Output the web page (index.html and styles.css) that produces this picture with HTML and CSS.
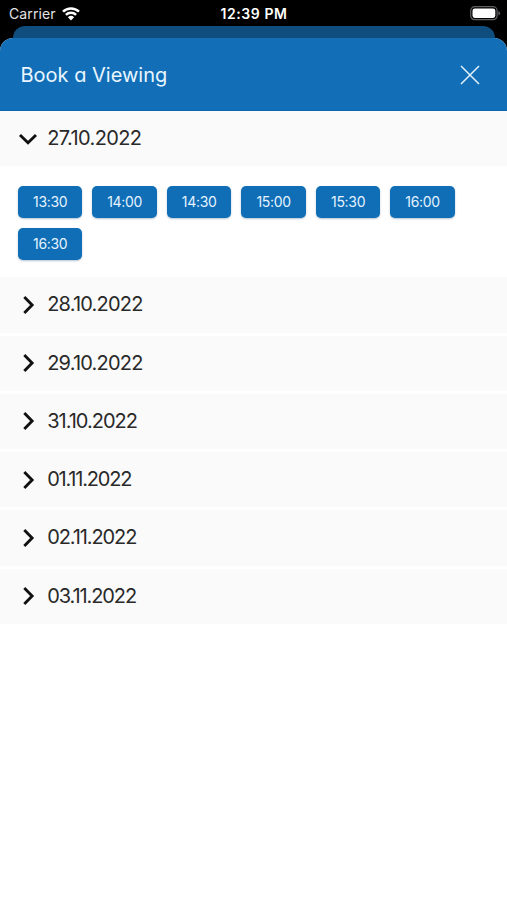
FILE: index.html
```html
<!DOCTYPE html>
<html lang="en">

<head>
    <meta charset="UTF-8">
    <meta name="viewport" content="width=device-width, initial-scale=1.0">
    <title>Book a Viewing</title>
    <link rel="stylesheet" href="styles.css">
</head>

<body>
    <div class="status">
        <div class="carrier">
            <span>Carrier</span>
            <svg class="wifi" viewBox="0 0 18 14" width="18" height="14">
                <path d="M1 4.7a11.4 11.4 0 0 1 16 0M3.9 7.8a7.3 7.3 0 0 1 10.2 0" fill="none" stroke="#fff" stroke-width="2.5"/>
                <path d="M9 13.4 5.9 10.3a4.5 4.5 0 0 1 6.2 0z" fill="#fff"/>
            </svg>
        </div>
        <span class="clock">12:39 PM</span>
        <svg class="battery" viewBox="0 0 31 15" width="31" height="15">
            <rect x=".7" y=".7" width="26.4" height="13" rx="4" fill="none" stroke="#626064" stroke-width="1.2"/>
            <rect x="2.5" y="2.5" width="22.8" height="9.4" rx="2.3" fill="#fff"/>
            <path d="M28.4 5v4.4q1.7-.7 1.7-2.2T28.4 5z" fill="#626064"/>
        </svg>
    </div>
    <div class="back"></div>
    <div class="sheet">
        <div class="header">
            <h1>Book a Viewing</h1>
            <svg class="close" viewBox="0 0 20 20" width="20" height="20">
                <path d="M1 1l18 18M19 1L1 19"/>
            </svg>
        </div>
        <ul class="days">
            <li class="open">
                <div class="day">
                    <svg class="arrow" viewBox="0 0 20 20" width="20" height="20"><path d="M2 6l8 7.8L18 6"/></svg>
                    <span class="date d1">27.10.2022</span>
                </div>
                <div class="times">
                    <button>13:30</button>
                    <button class="wide">14:00</button>
                    <button>14:30</button>
                    <button class="wide">15:00</button>
                    <button>15:30</button>
                    <button class="wide">16:00</button>
                    <button>16:30</button>
                </div>
            </li>
            <li>
                <div class="day">
                    <svg class="arrow" viewBox="0 0 20 20" width="20" height="20"><path d="M6.3 2l7.8 8-7.8 8"/></svg>
                    <span class="date d2">28.10.2022</span>
                </div>
            </li>
            <li>
                <div class="day">
                    <svg class="arrow" viewBox="0 0 20 20" width="20" height="20"><path d="M6.3 2l7.8 8-7.8 8"/></svg>
                    <span class="date d2">29.10.2022</span>
                </div>
            </li>
            <li>
                <div class="day">
                    <svg class="arrow" viewBox="0 0 20 20" width="20" height="20"><path d="M6.3 2l7.8 8-7.8 8"/></svg>
                    <span class="date d3">31.10.2022</span>
                </div>
            </li>
            <li>
                <div class="day">
                    <svg class="arrow" viewBox="0 0 20 20" width="20" height="20"><path d="M6.3 2l7.8 8-7.8 8"/></svg>
                    <span class="date d4">01.11.2022</span>
                </div>
            </li>
            <li>
                <div class="day">
                    <svg class="arrow" viewBox="0 0 20 20" width="20" height="20"><path d="M6.3 2l7.8 8-7.8 8"/></svg>
                    <span class="date d5">02.11.2022</span>
                </div>
            </li>
            <li>
                <div class="day">
                    <svg class="arrow" viewBox="0 0 20 20" width="20" height="20"><path d="M6.3 2l7.8 8-7.8 8"/></svg>
                    <span class="date d5">03.11.2022</span>
                </div>
            </li>
        </ul>
    </div>
</body>

</html>
```
FILE: styles.css
```css
* {
    margin: 0;
    padding: 0;
    box-sizing: border-box;
}

body {
    height: 900px;
    overflow: hidden;
    display: flex;
    flex-direction: column;
    background-color: #000;
    font-family: Inter, "Liberation Sans", sans-serif;
}

li {
    list-style: none;
}

svg {
    display: block;
    flex: none;
}

/* status bar */
.status {
    height: 26px;
    display: grid;
    grid-template-columns: 1fr auto 1fr;
    align-items: center;
    padding: 1px 6px 0 9px;
    color: #fff;
    font-size: 14px;
}

.carrier {
    display: flex;
    align-items: center;
    gap: 6px;
    color: #e4e4e4;
    letter-spacing: .1px;
}

.clock {
    font-weight: 600;
    letter-spacing: .6px;
    margin-right: 2px;
}

.battery {
    justify-self: end;
}

/* edge of the page behind the sheet */
.back {
    height: 24px;
    margin: 0 12px 0 13px;
    border-radius: 12px 12px 0 0;
    background-color: #0e4d7d;
}

.sheet {
    flex: 1;
    margin-top: -12px;
    border-radius: 13px 13px 0 0;
    overflow: hidden;
    background-color: #fff;
}

.header {
    height: 73px;
    display: flex;
    justify-content: space-between;
    align-items: center;
    padding: 1px 27px 0 20.5px;
    background-color: #126fb7;
    border-bottom: 1px solid #0c68b1;
}

.header h1 {
    font-size: 20px;
    font-weight: 400;
    color: #e9f6ff;
    font-feature-settings: "cv11", "ss03";
}

.close path {
    fill: none;
    stroke: #e3f2fd;
    stroke-width: 1.5;
}

.days li {
    padding-bottom: 3px;
}

.days .open {
    padding-bottom: 0;
}

.day {
    height: 55.25px;
    display: flex;
    align-items: center;
    gap: 9.5px;
    padding-left: 17.7px;
    background-color: #fafafa;
}

.arrow path {
    fill: none;
    stroke: #111;
    stroke-width: 2.9;
}

.date {
    font-size: 20px;
    line-height: 24px;
    padding-bottom: 1px;
    color: #292929;
    white-space: nowrap;
}

.d1 {
    letter-spacing: -.6px;
}

.d2 {
    letter-spacing: -.8px;
}

.d3 {
    letter-spacing: -1px;
}

.d4 {
    letter-spacing: -1.2px;
}

.d5 {
    letter-spacing: -1.1px;
}

.times {
    height: 111px;
    display: flex;
    flex-wrap: wrap;
    align-content: flex-start;
    gap: 10px 9.7px;
    padding: 20px 18px 0;
}

.times button {
    width: 64.4px;
    height: 32px;
    padding-bottom: 1px;
    border: none;
    border-radius: 5px;
    background-color: #106eb6;
    box-shadow: 0 1px 2px rgba(0, 60, 110, .3);
    color: #e4f3ff;
    font: 14px Inter, "Liberation Sans", sans-serif;
    letter-spacing: -.3px;
}

.times .wide {
    width: 65.2px;
}
```
